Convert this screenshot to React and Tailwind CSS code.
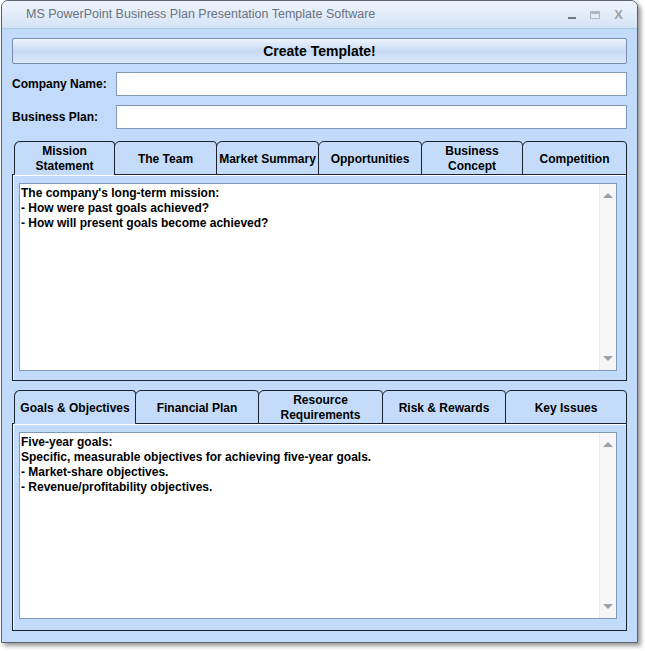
import { useState } from "react";

const FONT = { fontFamily: '"Liberation Sans", Arial, sans-serif' };

const topTabs = [
  { label: ["Mission", "Statement"], w: 101 },
  { label: ["The Team"], w: 103 },
  { label: ["Market Summary"], w: 103 },
  { label: ["Opportunities"], w: 104 },
  { label: ["Business", "Concept"], w: 102 },
  { label: ["Competition"], w: 105 },
];

const bottomTabs = [
  { label: ["Goals & Objectives"], w: 122 },
  { label: ["Financial Plan"], w: 124 },
  { label: ["Resource", "Requirements"], w: 125 },
  { label: ["Risk & Rewards"], w: 124 },
  { label: ["Key Issues"], w: 122 },
];

function ScrollBar() {
  return (
    <div className="w-[17px] h-full bg-[#f6f6f6] border-l border-[#ececec] flex flex-col justify-between items-center py-[9px]">
      <div className="w-0 h-0 border-l-[5px] border-r-[5px] border-b-[5px] border-l-transparent border-r-transparent border-b-[#9aa2ac]" />
      <div className="w-0 h-0 border-l-[5px] border-r-[5px] border-t-[5px] border-l-transparent border-r-transparent border-t-[#9aa2ac]" />
    </div>
  );
}

function TabBox({ tabs, lines, panelH, boxH }) {
  const [active, setActive] = useState(0);
  return (
    <div>
      <div className="flex pl-[2px] relative z-10">
        {tabs.map((t, i) => (
          <button
            key={i}
            type="button"
            onClick={() => setActive(i)}
            style={{ width: t.w }}
            className={
              "h-[34px] pt-[2px] border border-[#1b2230] rounded-tl-[6px] rounded-tr-[4px] bg-[#c4dcfa] flex flex-col items-center justify-center text-[12px] font-bold leading-[15px] text-black " +
              (i === active ? "border-b-[#c4dcfa]" : "border-b-[#1b2230]") +
              (i > 0 ? " -ml-px" : "")
            }
          >
            {t.label.map((l) => (
              <span key={l}>{l}</span>
            ))}
          </button>
        ))}
      </div>
      <div
        style={{ height: panelH }}
        className="-mt-px border border-[#1b2230] shadow-[inset_1px_1px_0_#ffffff] pl-[6px] pr-[9px] pt-[8px]"
      >
        <div style={{ height: boxH }} className="flex bg-white border border-[#7f9ab8]">
          <div className="flex-1 pl-[1px] pt-[2px] text-[12px] font-bold leading-[15px] text-black">
            {lines.map((l) => (
              <div key={l}>{l}</div>
            ))}
          </div>
          <ScrollBar />
        </div>
      </div>
    </div>
  );
}

export default function App() {
  return (
    <div className="w-[645px] h-[651px] bg-white pl-[1px]" style={FONT}>
      <div className="w-[637px] h-[643px] border border-[#56626f] rounded-t-[7px] bg-[#c2dbfa] shadow-[3px_3px_4px_rgba(0,0,0,0.4)] flex flex-col overflow-hidden">
        <div className="h-[28px] bg-gradient-to-b from-[#f0f5fc] to-[#d3e3f6] border-b border-[#b3cbe8] flex items-center pl-[24px] pr-[12px]">
          <span className="text-[12.5px] text-[#6a7280] flex-1">
            MS PowerPoint Business Plan Presentation Template Software
          </span>
          <div className="flex items-center gap-[14px]">
            <div className="w-[8px] h-[2px] bg-[#6f7984] mt-[7px]" />
            <div className="w-[10px] h-[8px] border border-[#b0b8c2] border-t-[3px]" />
            <span className="text-[13px] font-bold leading-none text-[#9aa2ac] mr-[2px]">X</span>
          </div>
        </div>

        <div className="px-[10px] pt-[9px]">
          <button
            type="button"
            className="w-full h-[26px] rounded-[2px] border border-[#7590ae] bg-gradient-to-b from-[#eef4fc] via-[#c6daf4] to-[#dbe8f8] text-[14px] font-bold text-black"
          >
            Create Template!
          </button>

          <div className="flex items-center mt-[8px]">
            <span className="w-[104px] text-[12px] font-bold">Company Name:</span>
            <input className="flex-1 h-[24px] bg-white border border-[#7f9ab8] outline-none px-1 text-[12px]" />
          </div>
          <div className="flex items-center mt-[9px]">
            <span className="w-[104px] text-[12px] font-bold">Business Plan:</span>
            <input className="flex-1 h-[24px] bg-white border border-[#7f9ab8] outline-none px-1 text-[12px]" />
          </div>

          <div className="mt-[12px]">
            <TabBox
              tabs={topTabs}
              panelH={207}
              boxH={188}
              lines={[
                "The company's long-term mission:",
                "- How were past goals achieved?",
                "- How will present goals become achieved?",
              ]}
            />
          </div>

          <div className="mt-[9px]">
            <TabBox
              tabs={bottomTabs}
              panelH={208}
              boxH={187}
              lines={[
                "Five-year goals:",
                "Specific, measurable objectives for achieving five-year goals.",
                "- Market-share objectives.",
                "- Revenue/profitability objectives.",
              ]}
            />
          </div>
        </div>
      </div>
    </div>
  );
}
